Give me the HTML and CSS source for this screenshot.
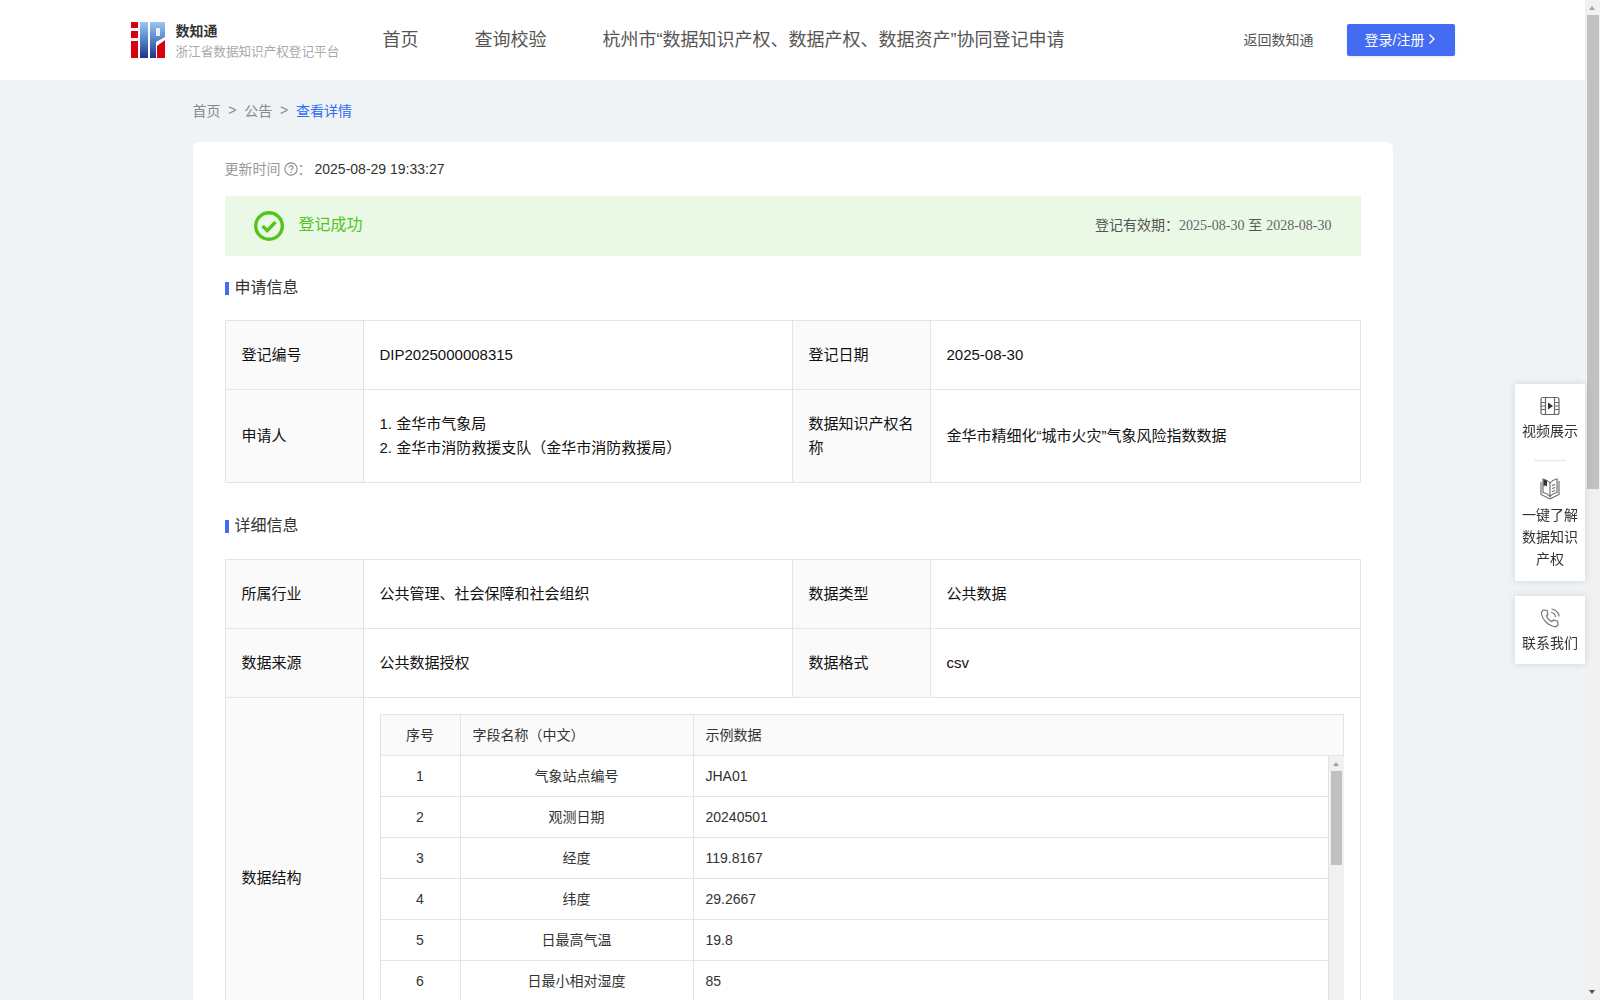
FILE: index.html
```html
<!DOCTYPE html>
<html lang="zh-CN">
<head>
    <meta charset="UTF-8">
    <title>数知通 - 查看详情</title>
    <link rel="stylesheet" href="styles.css">
</head>
<body>
    <div class="window">
        <div class="page">
            <header class="top-bar">
                <div class="top-inner">
                    <div class="brand">
                        <svg class="logo" width="34" height="36" viewBox="0 0 34 36">
                            <defs>
                                <linearGradient id="logoBlue" x1="0" y1="0" x2="0" y2="1">
                                    <stop offset="0" stop-color="#9cc6f2"/>
                                    <stop offset="0.45" stop-color="#5a8acb"/>
                                    <stop offset="1" stop-color="#1c3585"/>
                                </linearGradient>
                            </defs>
                            <rect x="0" y="0" width="7" height="6" fill="#d9000d"/>
                            <rect x="0" y="9" width="7" height="7" fill="#d9000d"/>
                            <rect x="0" y="19" width="7" height="17" fill="#d9000d"/>
                            <rect x="9" y="0" width="8" height="36" fill="url(#logoBlue)"/>
                            <path d="M19 0H34V15L25 20V36H19Z" fill="url(#logoBlue)"/>
                            <rect x="25" y="6" width="4" height="8" fill="#fff" opacity="0.85"/>
                            <path d="M26 24L34 18V36H26Z" fill="#d9000d"/>
                        </svg>
                        <div class="brand-text">
                            <div class="brand-name">数知通</div>
                            <div class="brand-sub">浙江省数据知识产权登记平台</div>
                        </div>
                    </div>
                    <nav class="nav">
                        <a>首页</a>
                        <a>查询校验</a>
                        <a>杭州市“数据知识产权、数据产权、数据资产”协同登记申请</a>
                    </nav>
                    <a class="back-link">返回数知通</a>
                    <button class="login-btn">登录/注册
                        <svg width="8" height="12" viewBox="0 0 8 12"><path d="M1.5 1.5L6 6L1.5 10.5" fill="none" stroke="#fff" stroke-width="1.4"/></svg>
                    </button>
                </div>
            </header>

            <main class="content">
                <div class="crumbs">
                    <span>首页</span><i>&gt;</i><span>公告</span><i>&gt;</i><span class="crumb-now">查看详情</span>
                </div>

                <div class="card">
                    <div class="update-row">
                        <span class="update-label">更新时间</span>
                        <svg class="help" width="14" height="14" viewBox="0 0 13 13">
                            <circle cx="6.5" cy="6.5" r="5.7" fill="none" stroke="#888" stroke-width="1"/>
                            <path d="M4.7 5.2a1.8 1.8 0 1 1 2.6 1.6c-.6.3-.8.6-.8 1.2" fill="none" stroke="#888" stroke-width="1"/>
                            <circle cx="6.5" cy="9.7" r=".7" fill="#888"/>
                        </svg>
                        <span class="update-label">：</span>
                        <span class="update-time">2025-08-29 19:33:27</span>
                    </div>

                    <div class="status-bar">
                        <svg width="30" height="30" viewBox="0 0 30 30">
                            <circle cx="15" cy="15" r="13.3" fill="none" stroke="#52c41a" stroke-width="3.4"/>
                            <path d="M8.5 15L13.2 19.6L21.5 11" fill="none" stroke="#52c41a" stroke-width="3.4"/>
                        </svg>
                        <span class="status-text">登记成功</span>
                        <span class="status-date">登记有效期：<em>2025-08-30</em> 至 <em>2028-08-30</em></span>
                    </div>

                    <h3 class="sec-title">申请信息</h3>
                    <table class="info-table">
                        <colgroup><col class="c-label"><col class="c-value"><col class="c-label"><col></colgroup>
                        <tr class="row-base">
                            <th>登记编号</th>
                            <td>DIP2025000008315</td>
                            <th>登记日期</th>
                            <td>2025-08-30</td>
                        </tr>
                        <tr class="row-tall">
                            <th>申请人</th>
                            <td>1. 金华市气象局<br>2. 金华市消防救援支队（金华市消防救援局）</td>
                            <th>数据知识产权名称</th>
                            <td>金华市精细化“城市火灾”气象风险指数数据</td>
                        </tr>
                    </table>

                    <h3 class="sec-title sec-next">详细信息</h3>
                    <table class="info-table">
                        <colgroup><col class="c-label"><col class="c-value"><col class="c-label"><col></colgroup>
                        <tr class="row-base">
                            <th>所属行业</th>
                            <td>公共管理、社会保障和社会组织</td>
                            <th>数据类型</th>
                            <td>公共数据</td>
                        </tr>
                        <tr class="row-base">
                            <th>数据来源</th>
                            <td>公共数据授权</td>
                            <th>数据格式</th>
                            <td>csv</td>
                        </tr>
                        <tr>
                            <th>数据结构</th>
                            <td colspan="3" class="struct-cell">
                                <table class="field-table field-head">
                                    <colgroup><col class="f-no"><col class="f-name"><col></colgroup>
                                    <tr><th>序号</th><th class="left">字段名称（中文）</th><th class="left">示例数据</th></tr>
                                </table>
                                <div class="field-scroll">
                                    <table class="field-table">
                                        <colgroup><col class="f-no"><col class="f-name"><col></colgroup>
                                        <tr><td>1</td><td>气象站点编号</td><td class="left">JHA01</td></tr>
                                        <tr><td>2</td><td>观测日期</td><td class="left">20240501</td></tr>
                                        <tr><td>3</td><td>经度</td><td class="left">119.8167</td></tr>
                                        <tr><td>4</td><td>纬度</td><td class="left">29.2667</td></tr>
                                        <tr><td>5</td><td>日最高气温</td><td class="left">19.8</td></tr>
                                        <tr><td>6</td><td>日最小相对湿度</td><td class="left">85</td></tr>
                                    </table>
                                    <div class="bar bar-inner">
                                        <span class="arrow-up"></span>
                                        <span class="thumb thumb-inner"></span>
                                    </div>
                                </div>
                            </td>
                        </tr>
                    </table>
                </div>
            </main>
        </div>

        <div class="bar bar-main">
            <span class="arrow-up"></span>
            <span class="thumb thumb-main"></span>
            <span class="arrow-down"></span>
        </div>
    </div>

    <aside class="side-tools">
        <div class="tool-box">
            <div class="tool">
                <svg width="20" height="20" viewBox="0 0 20 20" fill="none" stroke="#666" stroke-width="1.2">
                    <rect x="1" y="1.5" width="18" height="17" rx="2"/>
                    <path d="M5.5 1.5V18.5M14.5 1.5V18.5M1 6.5H5.5M1 10H5.5M1 13.5H5.5M14.5 6.5H19M14.5 10H19M14.5 13.5H19"/>
                    <path d="M8 6.5L13 10L8 13.5Z" fill="#333" stroke="none"/>
                </svg>
                <span>视频展示</span>
            </div>
            <div class="tool-line"></div>
            <div class="tool">
                <svg width="20" height="22" viewBox="0 0 20 22" fill="none" stroke="#666" stroke-width="1.1">
                    <path d="M1 4V16.5L10 21L19 16.5V3"/>
                    <path d="M3 1C6 1.5 8.5 3 10 5V18.5C8.5 16.5 6 15 3 14.5Z"/>
                    <path d="M10 5C11.5 3 14 1.5 17 1V14.5C14 15 11.5 16.5 10 18.5"/>
                    <path d="M3.5 1.5L7 2.5V8.5L5.2 7.2L3.5 8.5Z" fill="#333" stroke="none"/>
                    <path d="M12 7.5L15 6.5M12 10.5L15 9.5M12 13.5L15 12.5"/>
                </svg>
                <span>一键了解<br>数据知识<br>产权</span>
            </div>
        </div>
        <div class="tool-box tool-box-small">
            <div class="tool">
                <svg width="20" height="20" viewBox="0 0 20 20" fill="none" stroke="#777" stroke-width="1.2">
                    <path d="M4 2L7 2.5L8 6.5L6.3 8C7.3 10.3 9.5 12.6 11.8 13.6L13.5 12L17.5 13.3L18 16.3C17.5 18 15.5 19 13.5 18.5C7.5 17 2.5 11.5 1.5 6C1.2 4 2.2 2.5 4 2Z"/>
                    <path d="M11 4.5C13.5 4.7 15.3 6.5 15.5 9M11.5 1C15.5 1.3 18.7 4.5 19 8.5"/>
                </svg>
                <span>联系我们</span>
            </div>
        </div>
    </aside>
</body>
</html>
```

FILE: styles.css
```css
* {
    box-sizing: border-box;
}
body {
    margin: 0;
    height: 1000px;
    overflow: hidden;
    font-family: "Liberation Sans", Arial, "Noto Sans CJK SC", sans-serif;
    font-size: 14px;
    color: #333;
}
.window {
    display: flex;
    height: 1000px;
}
.page {
    flex: 1;
    min-width: 0;
    overflow: hidden;
    background-color: #eff3f6;
}

/* top bar */
.top-bar {
    height: 80px;
    background: #fff;
}
.top-inner {
    width: 1324px;
    height: 80px;
    margin: 0 auto;
    display: flex;
    align-items: center;
}
.brand {
    display: flex;
    align-items: center;
    width: 252px;
}
.brand-text {
    margin: 2px 0 0 11px;
}
.brand-name {
    font-size: 14px;
    font-weight: bold;
    line-height: 20px;
    color: #333;
}
.brand-sub {
    margin-top: 2px;
    font-size: 12.6px;
    line-height: 18px;
    color: #aaa;
}
.nav {
    display: flex;
    gap: 56px;
    padding-bottom: 4px;
    font-size: 18px;
    color: #555;
}
.back-link {
    margin-left: auto;
    padding-bottom: 2px;
    font-size: 14px;
    color: #555;
}
.login-btn {
    display: flex;
    align-items: center;
    justify-content: center;
    gap: 4px;
    width: 108px;
    height: 32px;
    margin-left: 33px;
    padding: 0 0 3px;
    border: none;
    border-radius: 2px;
    background-color: #436cf3;
    box-shadow: 0 1px 3px rgba(67, 108, 243, 0.15);
    color: #fff;
    font-family: inherit;
    font-size: 14px;
}

/* content */
.content {
    width: 1200px;
    margin: 0 auto;
}
.crumbs {
    display: flex;
    align-items: center;
    height: 62px;
    padding-bottom: 3px;
    color: #888;
}
.crumbs i {
    margin: 0 7.8px;
    font-style: normal;
}
.crumb-now {
    color: #2f6bf5;
}
.card {
    padding: 0 32px;
    background: #fff;
    border-radius: 6px 6px 0 0;
}
.update-row {
    display: flex;
    align-items: center;
    height: 54px;
}
.update-label {
    margin-bottom: 3px;
    color: #999;
}
.help {
    margin-left: 3px;
}
.update-time {
    margin-left: 3px;
    color: #333;
}
.status-bar {
    display: flex;
    align-items: center;
    height: 60px;
    padding: 0 29px;
    background-color: #eaf8e6;
}
.status-text {
    margin: 0 0 6px 15px;
    font-size: 16px;
    color: #52c41a;
}
.status-date {
    margin: 0 0 4px auto;
    color: #555;
}
.status-date em {
    font-family: "Liberation Serif", "Times New Roman", serif;
    font-style: normal;
    color: #666;
}
.sec-title {
    display: flex;
    align-items: center;
    height: 64px;
    margin: 0;
    padding-bottom: 4px;
    font-size: 16px;
    font-weight: normal;
    color: #333;
}
.sec-title::before {
    content: "";
    width: 4px;
    height: 13px;
    margin: 4px 6px 0 0;
    background-color: #436cf3;
}
.sec-next {
    margin-top: 10px;
    height: 66px;
}

/* info tables */
table {
    border-collapse: collapse;
    table-layout: fixed;
}
.info-table {
    width: 1136px;
    font-size: 15px;
    color: #111;
}
.c-label {
    width: 138px;
}
.c-value {
    width: 429px;
}
.info-table > tbody > tr > th,
.info-table > tbody > tr > td {
    padding: 0 16px;
    border: 1px solid #e4e4e4;
    font-weight: normal;
    line-height: 24px;
    text-align: left;
}
.info-table > tbody > tr > th {
    background-color: #fafafa;
}
.row-base {
    height: 69px;
}
.row-tall {
    height: 93px;
}
.info-table > tbody > tr > td.struct-cell {
    padding: 16px;
    height: 360px;
}

/* field table inside the data structure row */
.field-table {
    width: 100%;
    font-size: 14px;
    line-height: 20px;
    color: #333;
}
.f-no {
    width: 80px;
}
.f-name {
    width: 233px;
}
.field-table th,
.field-table td {
    height: 41px;
    padding: 0 12px;
    border: 1px solid #e4e4e4;
    font-weight: normal;
    text-align: center;
}
.field-head {
    background-color: #fafafa;
}
.field-table .left {
    text-align: left;
}
.field-scroll {
    display: flex;
    height: 286px;
    overflow: hidden;
}
.field-scroll .field-table {
    flex: 1;
    height: 0;
}
.field-scroll .field-table tr:first-child td {
    height: 40px;
    border-top: none;
}

/* drawn scrollbars */
.bar {
    position: relative;
    flex: none;
    width: 15px;
    background-color: #f1f1f1;
}
.bar-inner {
    height: 286px;
}
.thumb {
    display: block;
    background-color: #c1c1c1;
}
.thumb-main {
    width: 12px;
    height: 474px;
    margin: 15px 0 0 2px;
}
.thumb-inner {
    width: 11px;
    height: 94px;
    margin: 15px 0 0 2px;
}
.arrow-up,
.arrow-down {
    position: absolute;
    left: 4px;
    width: 0;
    height: 0;
    border-left: 3.5px solid transparent;
    border-right: 3.5px solid transparent;
}
.arrow-up {
    top: 6px;
    border-bottom: 4px solid #a3a3a3;
}
.arrow-down {
    bottom: 6px;
    border-top: 4px solid #505050;
}

/* floating tools */
.side-tools {
    position: fixed;
    top: 384px;
    right: 15px;
    display: flex;
    flex-direction: column;
    gap: 15px;
    width: 70px;
}
.tool-box {
    padding: 12px 0 11px;
    background: #fff;
    box-shadow: 0 0 8px rgba(0, 0, 0, 0.12);
}
.tool-box-small {
    padding-bottom: 10px;
}
.tool-box-small svg {
    margin-bottom: 5px;
}
.tool {
    display: flex;
    flex-direction: column;
    align-items: center;
    line-height: 22px;
    color: #333;
    text-align: center;
}
.tool svg {
    margin-bottom: 4px;
}
.tool-line {
    width: 32px;
    height: 1px;
    margin: 18px auto 17px;
    background-color: #e6e6e6;
}
```
